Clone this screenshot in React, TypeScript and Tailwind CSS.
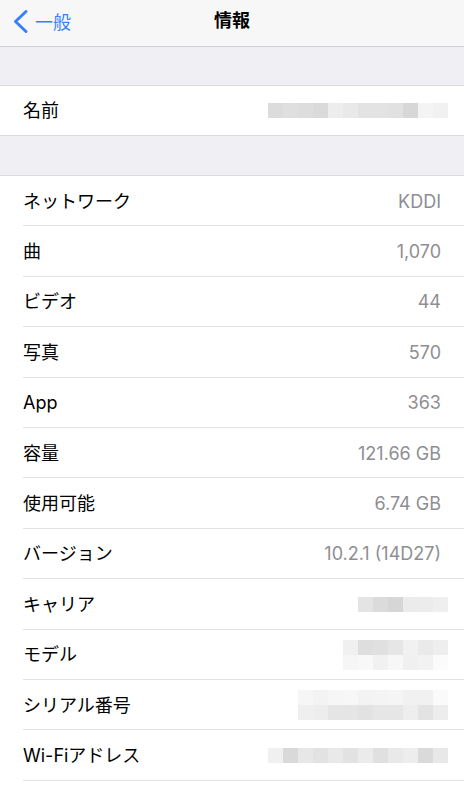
const font = { fontFamily: '"Inter", "Noto Sans CJK JP", sans-serif' };

type Row = { label: string; value?: string; mosaic?: { cols: number; rows: string[][] } };

const nameShades = [
  ["#dcdcdc", "#dfdfdf", "#dddddd", "#dadada", "#ededed", "#e9e9e9", "#e3e3e3", "#e3e3e3", "#e1e1e1", "#d7d7d7", "#f4f4f4", "#f1f1f1"],
];

const rows: Row[] = [
  { label: "ネットワーク", value: "KDDI" },
  { label: "曲", value: "1,070" },
  { label: "ビデオ", value: "44" },
  { label: "写真", value: "570" },
  { label: "App", value: "363" },
  { label: "容量", value: "121.66 GB" },
  { label: "使用可能", value: "6.74 GB" },
  { label: "バージョン", value: "10.2.1 (14D27)" },
  {
    label: "キャリア",
    mosaic: { cols: 6, rows: [["#e4e4e4", "#dbdbdb", "#d6d6d6", "#ebebeb", "#ececec", "#efefef"]] },
  },
  {
    label: "モデル",
    mosaic: {
      cols: 7,
      rows: [
        ["#f0f0f0", "#dedede", "#e0e0e0", "#e6e6e6", "#f1f1f1", "#eaeaea", "#eeeeee"],
        ["#f6f6f6", "#f8f8f8", "#f1f1f1", "#f7f7f7", "#f0f0f0", "#f2f2f2", "#fbfbfb"],
      ],
    },
  },
  {
    label: "シリアル番号",
    mosaic: {
      cols: 10,
      rows: [
        ["#f6f6f6", "#f3f3f3", "#f6f6f6", "#f7f7f7", "#f3f3f3", "#f4f4f4", "#f5f5f5", "#f1f1f1", "#f1f1f1", "#fafafa"],
        ["#efefef", "#ededed", "#e5e5e5", "#e5e5e5", "#e2e2e2", "#e6e6e6", "#e6e6e6", "#eeeeee", "#e3e3e3", "#ededed"],
      ],
    },
  },
  {
    label: "Wi-Fiアドレス",
    mosaic: {
      cols: 12,
      rows: [["#f0f0f0", "#d9d9d9", "#e7e7e7", "#e2e2e2", "#e9e9e9", "#e2e2e2", "#ebebeb", "#e0e0e0", "#e9e9e9", "#ededed", "#dadada", "#e8e8e8"]],
    },
  },
  { label: "", value: "" },
];

function Mosaic({ rows }: { rows: string[][] }) {
  return (
    <div className="flex flex-col">
      {rows.map((r, i) => (
        <div key={i} className="flex">
          {r.map((c, j) => (
            <div key={j} className="h-[15px] w-[15px]" style={{ backgroundColor: c }} />
          ))}
        </div>
      ))}
    </div>
  );
}

function Cell({ row, last }: { row: Row; last?: boolean }) {
  return (
    <div className="relative flex h-[50.4px] items-center justify-between pl-[23px] pr-[16px]">
      <span className="text-[18px] text-black">{row.label}</span>
      {row.mosaic ? <Mosaic rows={row.mosaic.rows} /> : <span className="pr-[7px] text-[18px] text-[#8e8e93]">{row.value}</span>}
      {!last && <div className="absolute bottom-0 left-[23px] right-0 h-px bg-[#e2e2e4]" />}
    </div>
  );
}

export default function App() {
  return (
    <div className="h-[800px] w-[464px] overflow-hidden bg-[#efeff4]" style={font}>
      <div className="relative flex h-[47px] items-center justify-center border-b border-[#cfcfd3] bg-[#f7f7f8]">
        <div className="absolute left-[12px] top-0 flex h-[44px] items-center gap-[5px]">
          <svg width="18" height="26" viewBox="0 0 18 26" fill="none">
            <path d="M14 2.5 L3.5 12.5 L14 22.5" stroke="#3880f7" strokeWidth="3" strokeLinecap="round" strokeLinejoin="round" />
          </svg>
          <span className="text-[18px] text-[#3880f7]">一般</span>
        </div>
        <span className="-mt-[5px] text-[18px] font-bold text-black">情報</span>
      </div>

      <div className="h-[38px]" />

      <div className="border-y border-[#dcdce0] bg-white">
        <div className="flex h-[49px] items-center justify-between pl-[23px] pr-[16px]">
          <span className="text-[18px] text-black">名前</span>
          <Mosaic rows={nameShades} />
        </div>
      </div>

      <div className="h-[39px]" />

      <div className="border-t border-[#dcdce0] bg-white">
        {rows.map((r, i) => (
          <Cell key={i} row={r} last={i === rows.length - 1} />
        ))}
      </div>
    </div>
  );
}
